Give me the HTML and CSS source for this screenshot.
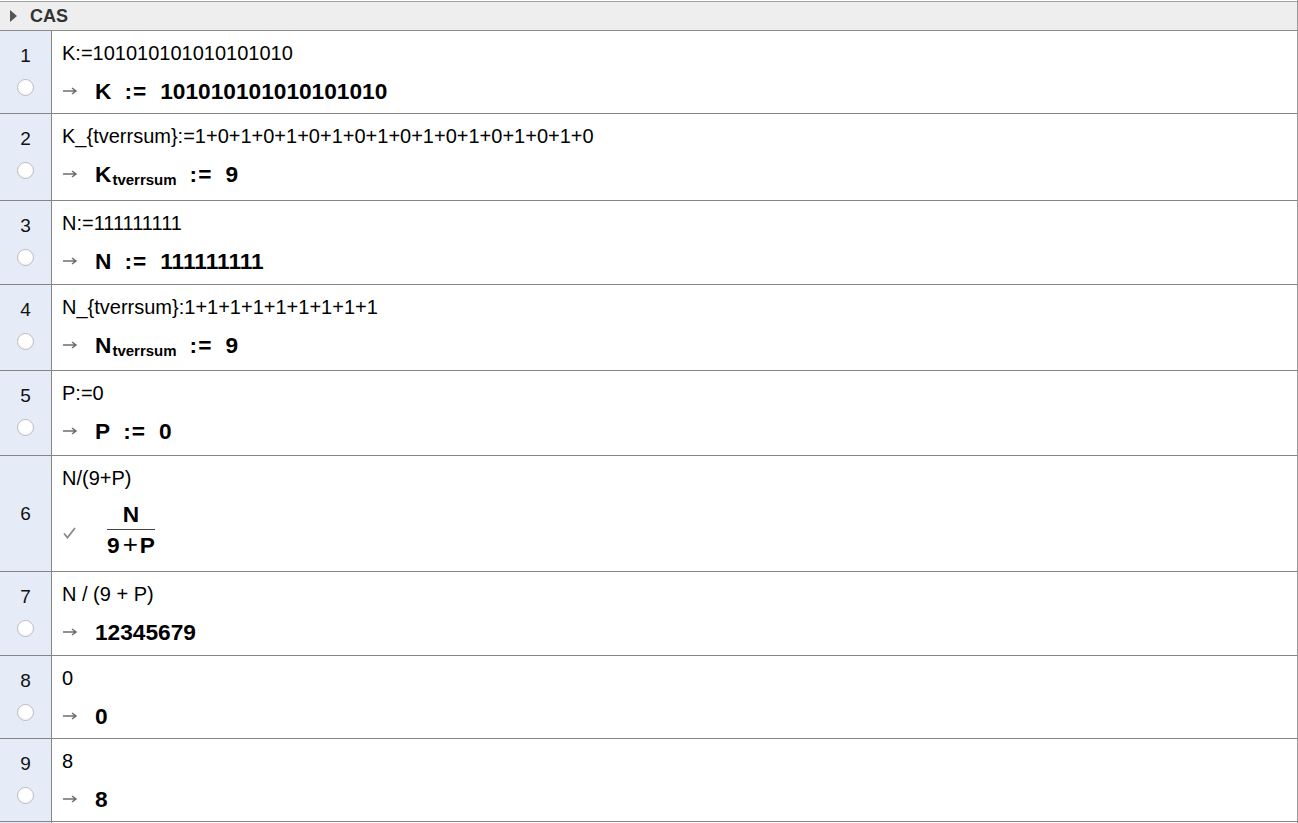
FILE: index.html
```html
<!DOCTYPE html>
<html>
<head>
<meta charset="utf-8">
<link rel="stylesheet" href="styles.css">
</head>
<body>
<div class="cas">
  <div class="header">
    <span class="tri"></span>
    <span class="title">CAS</span>
  </div>
  <div class="rows">
    <div class="row h83">
      <div class="gutter"><span class="num">1</span><span class="radio"></span></div>
      <div class="cell">
        <div class="input">K:=101010101010101010</div>
        <div class="output">
          <span class="mark"><svg class="arrow" width="16" height="10" viewBox="0 0 16 10"><path d="M1 5H14M10 2L14 5L10 8" fill="none" stroke="#6d6d6d" stroke-width="1.5"/></svg></span>
          <span class="math"><span class="v">K</span><span class="op">:=</span><span>101010101010101010</span></span>
        </div>
      </div>
    </div>
    <div class="row h87">
      <div class="gutter"><span class="num">2</span><span class="radio"></span></div>
      <div class="cell">
        <div class="input">K_{tverrsum}:=1+0+1+0+1+0+1+0+1+0+1+0+1+0+1+0+1+0</div>
        <div class="output">
          <span class="mark"><svg class="arrow" width="16" height="10" viewBox="0 0 16 10"><path d="M1 5H14M10 2L14 5L10 8" fill="none" stroke="#6d6d6d" stroke-width="1.5"/></svg></span>
          <span class="math"><span class="v">K</span><span class="sub">tverrsum</span><span class="op">:=</span><span>9</span></span>
        </div>
      </div>
    </div>
    <div class="row h84">
      <div class="gutter"><span class="num">3</span><span class="radio"></span></div>
      <div class="cell">
        <div class="input">N:=111111111</div>
        <div class="output">
          <span class="mark"><svg class="arrow" width="16" height="10" viewBox="0 0 16 10"><path d="M1 5H14M10 2L14 5L10 8" fill="none" stroke="#6d6d6d" stroke-width="1.5"/></svg></span>
          <span class="math"><span class="v">N</span><span class="op">:=</span><span>111111111</span></span>
        </div>
      </div>
    </div>
    <div class="row h86">
      <div class="gutter"><span class="num">4</span><span class="radio"></span></div>
      <div class="cell">
        <div class="input">N_{tverrsum}:1+1+1+1+1+1+1+1+1</div>
        <div class="output">
          <span class="mark"><svg class="arrow" width="16" height="10" viewBox="0 0 16 10"><path d="M1 5H14M10 2L14 5L10 8" fill="none" stroke="#6d6d6d" stroke-width="1.5"/></svg></span>
          <span class="math"><span class="v">N</span><span class="sub">tverrsum</span><span class="op">:=</span><span>9</span></span>
        </div>
      </div>
    </div>
    <div class="row h85">
      <div class="gutter"><span class="num">5</span><span class="radio"></span></div>
      <div class="cell">
        <div class="input">P:=0</div>
        <div class="output">
          <span class="mark"><svg class="arrow" width="16" height="10" viewBox="0 0 16 10"><path d="M1 5H14M10 2L14 5L10 8" fill="none" stroke="#6d6d6d" stroke-width="1.5"/></svg></span>
          <span class="math"><span class="v">P</span><span class="op">:=</span><span>0</span></span>
        </div>
      </div>
    </div>
    <div class="row h116">
      <div class="gutter center"><span class="num">6</span></div>
      <div class="cell">
        <div class="input">N/(9+P)</div>
        <div class="output fracout">
          <span class="mark check"><svg width="13" height="12" viewBox="0 0 13 12"><path d="M1 6.5L4.5 10.5L12 1" fill="none" stroke="#8a8a8a" stroke-width="1.8"/></svg></span>
          <span class="frac">
            <span class="fnum">N</span>
            <span class="fden">9<span class="plus">+</span>P</span>
          </span>
        </div>
      </div>
    </div>
    <div class="row h84">
      <div class="gutter"><span class="num">7</span><span class="radio"></span></div>
      <div class="cell">
        <div class="input">N / (9 + P)</div>
        <div class="output">
          <span class="mark"><svg class="arrow" width="16" height="10" viewBox="0 0 16 10"><path d="M1 5H14M10 2L14 5L10 8" fill="none" stroke="#6d6d6d" stroke-width="1.5"/></svg></span>
          <span class="math">12345679</span>
        </div>
      </div>
    </div>
    <div class="row h83">
      <div class="gutter"><span class="num">8</span><span class="radio"></span></div>
      <div class="cell">
        <div class="input">0</div>
        <div class="output">
          <span class="mark"><svg class="arrow" width="16" height="10" viewBox="0 0 16 10"><path d="M1 5H14M10 2L14 5L10 8" fill="none" stroke="#6d6d6d" stroke-width="1.5"/></svg></span>
          <span class="math">0</span>
        </div>
      </div>
    </div>
    <div class="row h83">
      <div class="gutter"><span class="num">9</span><span class="radio"></span></div>
      <div class="cell">
        <div class="input">8</div>
        <div class="output">
          <span class="mark"><svg class="arrow" width="16" height="10" viewBox="0 0 16 10"><path d="M1 5H14M10 2L14 5L10 8" fill="none" stroke="#6d6d6d" stroke-width="1.5"/></svg></span>
          <span class="math">8</span>
        </div>
      </div>
    </div>
    <div class="row h83">
      <div class="gutter"></div>
      <div class="cell"></div>
    </div>
  </div>
</div>
</body>
</html>
```

FILE: styles.css
```css
html, body {
  margin: 0;
  padding: 0;
  background: #ffffff;
  overflow: hidden;
}
body {
  font-family: "Liberation Sans", Arial, sans-serif;
  color: #000;
}
.cas {
  width: 1298px;
  height: 823px;
  box-sizing: border-box;
  padding-top: 1px;
  border-right: 1px solid #9a9a9a;
  overflow: hidden;
}
.header {
  height: 30px;
  box-sizing: border-box;
  border-top: 1px solid #a0a0a0;
  border-bottom: 1px solid #8c8c8c;
  background: #eeeeee;
  display: flex;
  align-items: center;
  padding-left: 10px;
}
.tri {
  width: 0;
  height: 0;
  border-top: 6px solid transparent;
  border-bottom: 6px solid transparent;
  border-left: 7px solid #555;
  margin-right: 13px;
}
.title {
  font-weight: bold;
  font-size: 18px;
  color: #333;
}
.row {
  display: grid;
  grid-template-columns: 52px 1fr;
  box-sizing: border-box;
  border-bottom: 1px solid #858585;
}
.h83 { height: 83px; }
.h84 { height: 84px; }
.h85 { height: 85px; }
.h86 { height: 86px; }
.h87 { height: 87px; }
.h116 { height: 116px; }
.gutter {
  background: #e6ecf7;
  border-right: 1px solid #858585;
  display: flex;
  flex-direction: column;
  align-items: center;
}
.gutter.center {
  justify-content: center;
}
.num {
  font-size: 19px;
  line-height: 24px;
  margin-top: 13px;
  color: #111;
}
.gutter.center .num {
  margin-top: 0;
}
.radio {
  width: 17px;
  height: 17px;
  box-sizing: border-box;
  border-radius: 50%;
  border: 1px solid #bdbdbd;
  background: radial-gradient(circle at 50% 40%, #ffffff 50%, #eeeeee 100%);
  margin-top: 11px;
}
.cell {
  padding-left: 10px;
  display: flex;
  flex-direction: column;
}
.input {
  font-size: 20px;
  line-height: 24px;
  margin-top: 10px;
  white-space: nowrap;
}
.output {
  display: flex;
  align-items: center;
  height: 32px;
  margin-top: 10px;
}
.mark {
  width: 33px;
  display: flex;
  align-items: center;
  flex: none;
}
.math {
  font-weight: bold;
  font-size: 22.7px;
  white-space: nowrap;
  display: flex;
  align-items: baseline;
}
.op {
  margin: 0 13px 0 13px;
  letter-spacing: 1px;
}
.sub {
  font-size: 15px;
  position: relative;
  top: 3px;
  margin-left: 1px;
}
.fracout {
  height: auto;
  margin-top: 9px;
  align-items: flex-start;
}
.check {
  margin-top: 28px;
  padding-left: 1px;
  width: 32px;
}
.frac {
  display: inline-flex;
  flex-direction: column;
  align-items: stretch;
  margin-left: 12px;
  font-weight: bold;
  font-size: 22.7px;
}
.fnum {
  text-align: center;
  line-height: 30px;
  border-bottom: 1.5px solid #444;
}
.fden {
  text-align: center;
  line-height: 31px;
}
.plus {
  font-weight: normal;
  font-size: 26px;
  line-height: 20px;
  margin: 0 2px 0 3px;
}
```
